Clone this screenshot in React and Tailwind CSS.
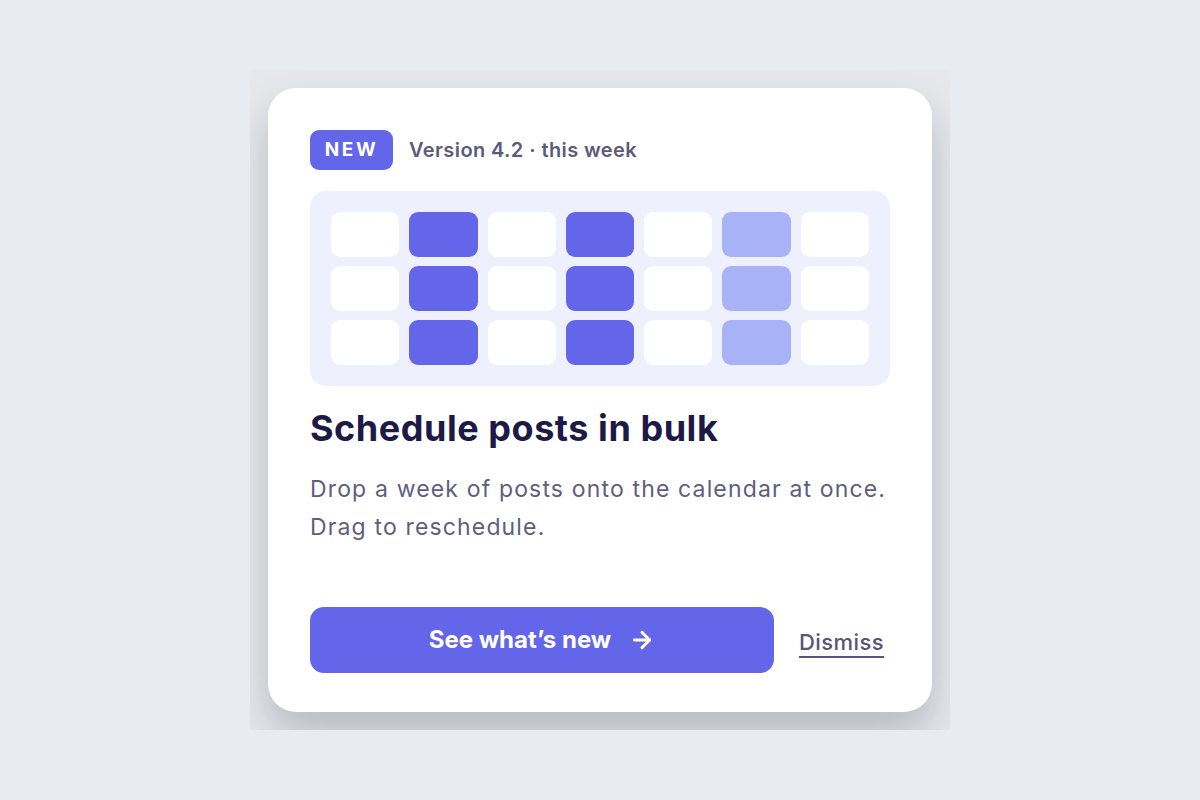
import React from "react";
import { ArrowRight } from "lucide-react";

const rows = [0, 1, 2];
const cols = ["white", "dark", "white", "dark", "white", "light", "white"];

const cellColor = {
  white: "bg-white",
  dark: "bg-[#6366e8]",
  light: "bg-[#a7b2f7]",
};

const App = () => {
  return (
    <div
      className="flex h-[800px] w-[1200px] items-center justify-center bg-[#e8ebf0]"
      style={{ fontFamily: "Inter, 'Noto Sans', sans-serif" }}
    >
      {/* clipped frame around the card */}
      <div className="flex h-[660px] w-[700px] items-center justify-center overflow-hidden bg-[#e6e8ec]">
        <div className="flex h-[624px] w-[664px] flex-col rounded-[28px] bg-white px-[42px] pb-[39px] pt-[42px] shadow-[0_22px_40px_rgba(20,24,40,0.22)]">
          {/* Header */}
          <div className="flex items-center gap-4">
            <span className="flex h-[40px] w-[83px] items-center justify-center rounded-[9px] bg-[#6366e8] text-[19px] font-bold tracking-[0.14em] text-white">
              NEW
            </span>
            <span className="text-[20px] font-semibold tracking-[0.02em] text-[#5c5b7b]">
              Version 4.2 · this week
            </span>
          </div>

          {/* Calendar */}
          <div className="mt-[21px] grid grid-cols-7 gap-x-[10px] gap-y-[9px] rounded-[16px] bg-[#eff0fd] p-[21px]">
            {rows.map((r) =>
              cols.map((c, i) => (
                <div
                  key={`${r}-${i}`}
                  className={`h-[45px] rounded-[9px] ${cellColor[c]}`}
                />
              ))
            )}
          </div>

          {/* Text */}
          <h2 className="mt-[18px] text-[36px] font-bold leading-[48px] tracking-[0.015em] text-[#1d1a48]">
            Schedule posts in bulk
          </h2>
          <p className="mt-[18px] whitespace-nowrap text-[23px] leading-[38px] tracking-[0.05em] text-[#5f5e7e]">
            Drop a week of posts onto the calendar at once.
            <br />
            Drag to reschedule.
          </p>

          {/* Actions */}
          <div className="mt-auto flex items-center gap-[25px]">
            <button className="flex h-[66px] w-[464px] items-center justify-center gap-[18px] rounded-[14px] bg-[#6366e8] text-[24px] font-bold text-white">
              See what’s new
              <ArrowRight size={26} strokeWidth={2.75} />
            </button>
            <button className="mt-[4px] text-[22px] font-medium tracking-[0.02em] text-[#56557a] underline decoration-[2px] underline-offset-[6px]">
              Dismiss
            </button>
          </div>
        </div>
      </div>
    </div>
  );
};

export default App;
